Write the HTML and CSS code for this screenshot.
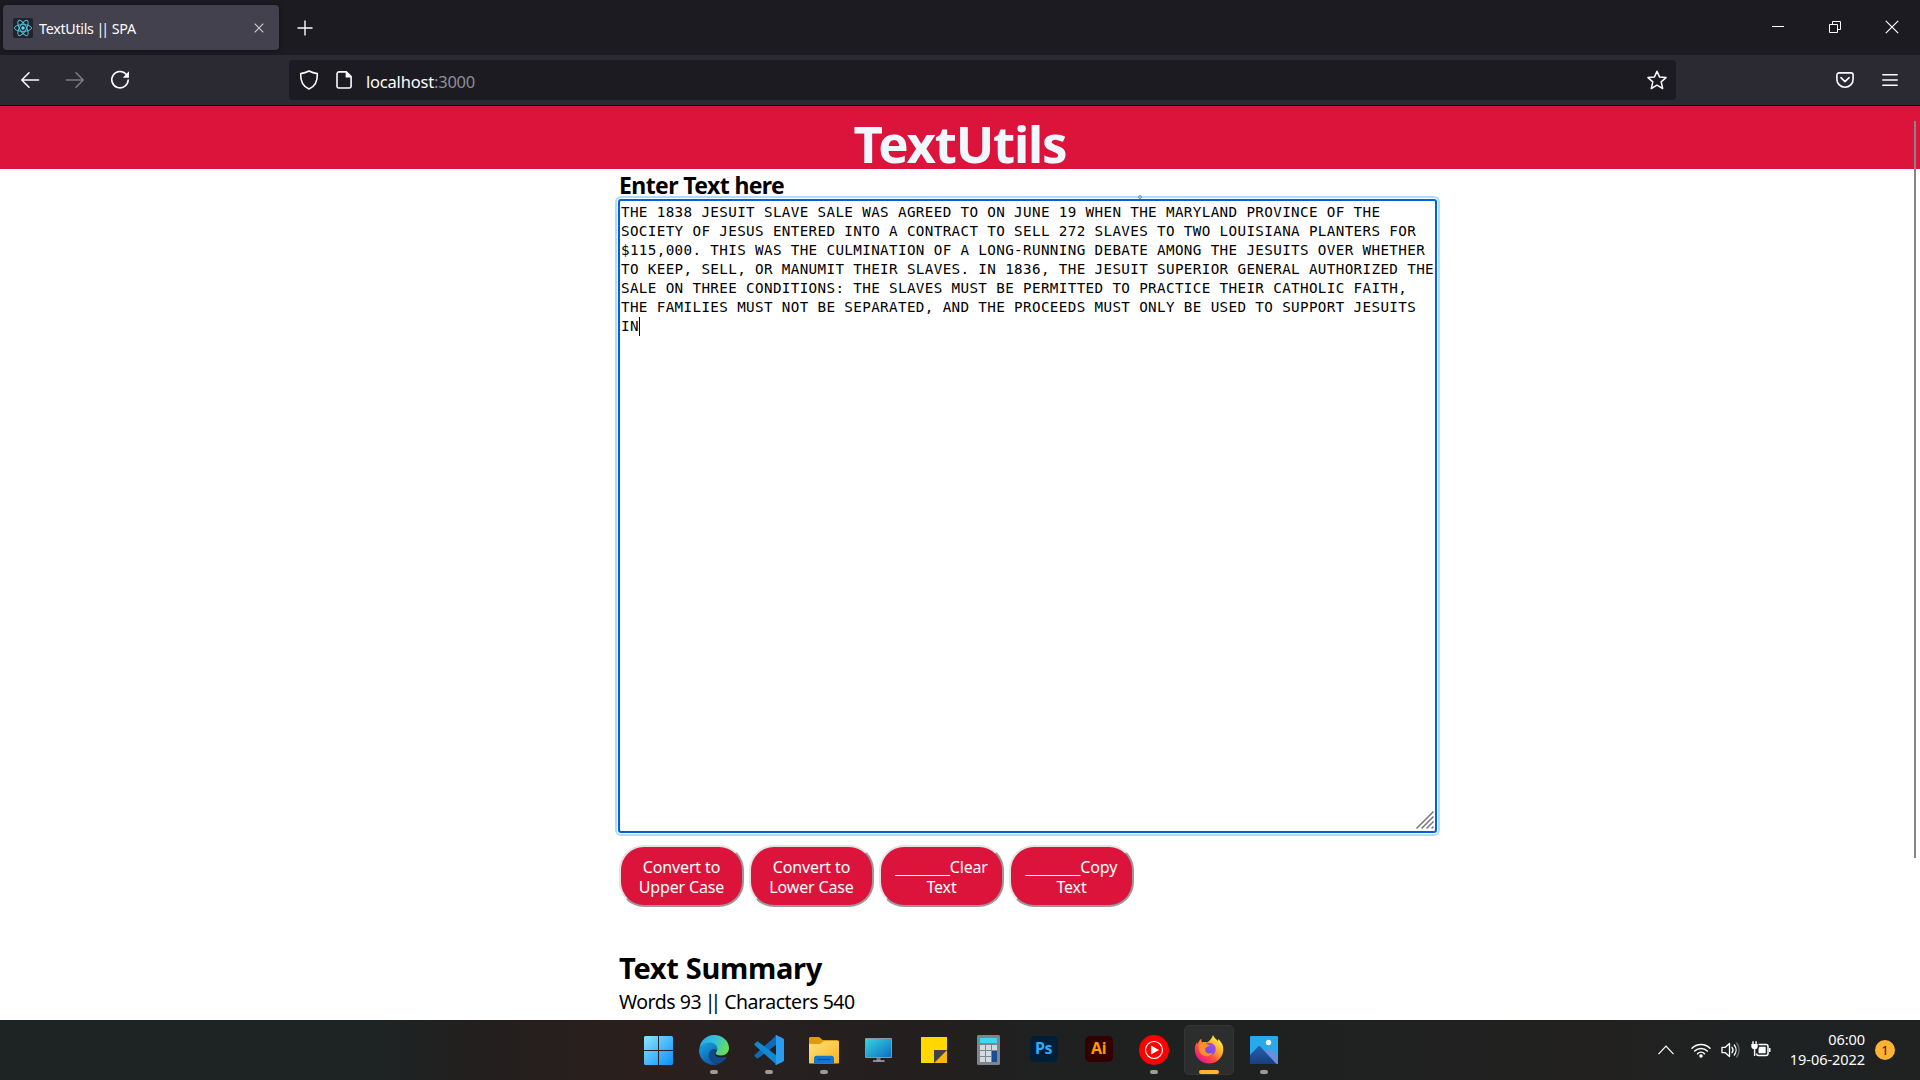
FILE: index.html
```
<!DOCTYPE html>
<html lang="en">
<head>
<meta charset="utf-8">
<title>TextUtils || SPA</title>
<link rel="stylesheet" href="styles.css">
</head>
<body>
<div class="tabbar">
  <div class="tab">
    <svg class="favicon" viewBox="0 0 20 20"><rect width="20" height="20" rx="2" fill="#20232a"/><g fill="none" stroke="#53bdd8" stroke-width="1"><ellipse cx="10" cy="10" rx="8.6" ry="3.4"/><ellipse cx="10" cy="10" rx="8.6" ry="3.4" transform="rotate(60 10 10)"/><ellipse cx="10" cy="10" rx="8.6" ry="3.4" transform="rotate(120 10 10)"/></g><circle cx="10" cy="10" r="1.7" fill="#61dafb"/></svg>
    <span class="tab-title">TextUtils <span class="pipes">||</span> SPA</span>
    <svg class="tab-close" viewBox="0 0 10 10"><path d="M.7.7l8.6 8.6M9.3.7L.7 9.3" stroke="#d0d0d5" stroke-width="1.1" fill="none"/></svg>
  </div>
  <svg class="new-tab" viewBox="0 0 16 16"><path d="M8 .5v15M.5 8h15" stroke="#fbfbfe" stroke-width="1.4" fill="none"/></svg>
  <div class="window-controls">
    <svg viewBox="0 0 14 14"><path d="M1 6.5h12" stroke="#fff"/></svg>
    <svg viewBox="0 0 14 14"><path d="M1.5 4.5h8v8h-8zM4.5 4.5v-3h8v8h-3" stroke="#fff" fill="none"/></svg>
    <svg viewBox="0 0 14 14"><path d="M.8.8l12.4 12.4M13.2.8L.8 13.2" stroke="#fff" stroke-width="1.2" fill="none"/></svg>
  </div>
</div>
<div class="toolbar">
  <div class="nav">
    <svg viewBox="0 0 20 20"><path d="M18.6 10H2M9 2.8L1.8 10 9 17.2" fill="none" stroke="#fbfbfe" stroke-width="1.6" stroke-linecap="round" stroke-linejoin="round"/></svg>
    <svg viewBox="0 0 20 20"><path d="M1.4 10H18M11 2.8l7.2 7.2-7.2 7.2" fill="none" stroke="#7b7a81" stroke-width="1.6" stroke-linecap="round" stroke-linejoin="round"/></svg>
    <svg viewBox="0 0 20 20"><path d="M16.2 4.3A8.2 8.2 0 1 0 18.2 10" fill="none" stroke="#fbfbfe" stroke-width="1.6" stroke-linecap="round"/><path d="M19 1.2v6.6h-6.2z" fill="#fbfbfe"/></svg>
  </div>
  <div class="urlbar">
    <svg class="shield" viewBox="0 0 20 20"><path d="M10 1c2.6 1.4 5.3 2.2 8.3 2.6C18.6 10.600 16 16.500 10 19 4 16.500 1.400 10.600 1.700 3.600 4.700 3.200 7.400 2.400 10 1z" fill="none" stroke="#fbfbfe" stroke-width="1.6" stroke-linejoin="round"/></svg>
    <svg class="page-icon" viewBox="0 0 16 18"><path d="M3 .9h7.300L15.100 5.700V15a2 2 0 0 1-2 2H3a2 2 0 0 1-2-2V2.900a2 2 0 0 1 2-2z" fill="none" stroke="#fbfbfe" stroke-width="1.600"/><path d="M9.600.8v5.600h5.600z" fill="#fbfbfe"/></svg>
    <span class="url">localhost<span class="port">:3000</span></span>
    <svg class="star" viewBox="0 0 20 20"><path d="M10 1.200l2.500 5.700 6.500.7-4.800 4.300 1.500 6.600L10 15.200l-5.700 3.300 1.500-6.600L1 7.600l6.500-.7z" fill="none" stroke="#fbfbfe" stroke-width="1.500" stroke-linejoin="round"/></svg>
  </div>
  <svg class="pocket" viewBox="0 0 18 16"><path d="M3 .9h12a2.100 2.100 0 0 1 2.100 2.100v4.200a8.100 8.100 0 0 1-16.200 0V3A2.100 2.100 0 0 1 3 .9z" fill="none" stroke="#fbfbfe" stroke-width="1.600"/><path d="M4.900 5.700L9 9.600l4.100-3.900" fill="none" stroke="#fbfbfe" stroke-width="1.600" stroke-linecap="round" stroke-linejoin="round"/></svg>
  <svg class="menu" viewBox="0 0 16 14"><path d="M.8 1.800h14.400M.8 7h14.400M.8 12.200h14.400" stroke="#fbfbfe" stroke-width="1.500" stroke-linecap="round"/></svg>
</div>
<div class="page">
  <header class="site-header"><h1>TextUtils</h1></header>
  <main class="content">
    <label class="field-label">Enter Text here</label>
    <div class="editor" role="textbox"><div class="editor-text">THE 1838 JESUIT SLAVE SALE WAS AGREED TO ON JUNE 19 WHEN THE MARYLAND PROVINCE OF THE
SOCIETY OF JESUS ENTERED INTO A CONTRACT TO SELL 272 SLAVES TO TWO LOUISIANA PLANTERS FOR
$115,000. THIS WAS THE CULMINATION OF A LONG-RUNNING DEBATE AMONG THE JESUITS OVER WHETHER
TO KEEP, SELL, OR MANUMIT THEIR SLAVES. IN 1836, THE JESUIT SUPERIOR GENERAL AUTHORIZED THE
SALE ON THREE CONDITIONS: THE SLAVES MUST BE PERMITTED TO PRACTICE THEIR CATHOLIC FAITH,
THE FAMILIES MUST NOT BE SEPARATED, AND THE PROCEEDS MUST ONLY BE USED TO SUPPORT JESUITS
IN<span class="caret"></span></div>
      <svg class="grip" viewBox="0 0 18 18"><path d="M.5 17.500l17-17M5.500 17.500l12-12M10.500 17.500l7-7M15.500 17.500l2-2" stroke="#777" stroke-width="1.500"/></svg>
      <span class="pointer-dot"></span>
    </div>
    <div class="buttons">
      <button>Convert to<br>Upper Case</button>
      <button>Convert to<br>Lower Case</button>
      <button><span class="blank">_______</span>Clear<br>Text</button>
      <button><span class="blank">_______</span>Copy<br>Text</button>
    </div>
    <h2>Text Summary</h2>
    <p class="counts">Words 93 <span class="pipes">||</span> Characters 540</p>
  </main>
  <div class="scroll-thumb"></div>
</div>
<div class="taskbar">
  <div class="apps">
    <div class="app"><svg viewBox="0 0 30 30"><defs><linearGradient id="win" x1="0" y1="0" x2="1" y2="1"><stop offset="0" stop-color="#8be4ff"/><stop offset="1" stop-color="#0a90f5"/></linearGradient></defs><path d="M1.500 1H14v14H0V2.500A1.500 1.500 0 0 1 1.500 1zM15 1h12.500A1.500 1.500 0 0 1 29 2.500V15H15zM0 16h14v14H1.500A1.500 1.500 0 0 1 0 28.500zM15 16h14v12.500a1.500 1.500 0 0 1-1.500 1.500H15z" fill="url(#win)"/></svg></div>
    <div class="app running"><svg viewBox="0 0 30 30"><defs><linearGradient id="eg" x1="0" y1=".2" x2="1" y2=".6"><stop offset="0" stop-color="#2ba8e0"/><stop offset=".5" stop-color="#35c1d8"/><stop offset="1" stop-color="#6be04d"/></linearGradient><linearGradient id="eb" x1="0" y1="0" x2=".6" y2="1"><stop offset="0" stop-color="#1ba5e8"/><stop offset="1" stop-color="#0c59a4"/></linearGradient></defs><path d="M.5 13C1.500 5.500 7.500 0 15 0c8.500 0 15 6 15 13 0 4.500-3.500 7.500-8 7.500-3.500 0-5.500-1.200-5.500-2.300 0-.9 1.800-1.700 1.800-4.200 0-3-3-5.500-7-5.500C6.500 8.500 2.500 10 .5 13z" fill="url(#eg)"/><path d="M0 15.500C.5 10.500 5 7.500 10.500 7.500c4.500 0 7.800 2.700 7.800 6 0 .8-.2 1.500-.6 2C15 13 10.500 15.500 10.500 20c0 5 4 9 9 9.200-1.400.5-2.900.8-4.500.8C6.500 30 0 23.500 0 15.500z" fill="url(#eb)"/><path d="M13 14.500c-3.500 2.500-4 6.500-2.500 9.500 2.500 5 8.500 6 12 3.500 2-1.300 3.700-3 5-5 .3-.5-.1-.9-.7-.7-4.800 1.900-11.300.2-11.300-3.600 0-1.200 1-1.600 1.200-3-.8-1.200-2.400-1.400-3.700-.7z" fill="#114a8b"/></svg></div>
    <div class="app running"><svg viewBox="0 0 30 30"><path d="M22.500.2L1 19.500c-.8.700-.8 1.500 0 2.200L2.700 23c.6.500 1.200.5 1.800.1L27 6z" fill="#0d6cb5"/><path d="M22.500 29.800L1 10.500c-.8-.7-.8-1.500 0-2.200L2.700 7c.6-.5 1.200-.5 1.800-.1L27 24z" fill="#1088d2"/><path d="M22 0l7 3.300c.6.300 1 .9 1 1.500v20.400c0 .6-.4 1.200-1 1.500L22 30c-.7.200-1.300 0-1.800-.5.900.7 1.800.3 1.800-1V1.500c0-1.300-.9-1.700-1.800-1C20.700 0 21.300-.2 22 0z" fill="#2a9df0"/></svg></div>
    <div class="app running"><svg viewBox="0 0 30 30"><defs><linearGradient id="fo" x1="0" y1="0" x2="1" y2="1"><stop offset="0" stop-color="#ffe07d"/><stop offset="1" stop-color="#f9b51c"/></linearGradient></defs><path d="M0 3.500C0 2.600.6 2 1.500 2h8c.6 0 1 .2 1.400.6L13.500 5H28c1.200 0 2 .8 2 2v5H0z" fill="#e09a10"/><path d="M0 9h10.500c.7 0 1.200-.2 1.700-.7L14 6.500C14.400 6.200 14.800 6 15.400 6H29c.6 0 1 .4 1 1v20.500c0 .6-.4 1-1 1H1c-.6 0-1-.4-1-1z" fill="url(#fo)"/><path d="M5 28.500V23c0-1.300 1-2.300 2.300-2.300h15.400c1.300 0 2.300 1 2.300 2.300v5.500z" fill="#1477cf"/><path d="M8.500 24.500h13" stroke="#0a4d96" stroke-width="1.200"/></svg></div>
    <div class="app"><svg viewBox="0 0 30 30"><defs><linearGradient id="pc" x1="0" y1="0" x2="1" y2="1"><stop offset="0" stop-color="#36d3dd"/><stop offset="1" stop-color="#0d6fc4"/></linearGradient></defs><path d="M12.500 22h4v4h-4z" fill="#737b82"/><path d="M9 25.300h11.500v1.500H9z" fill="#a8adb2"/><rect x="1" y="3" width="27" height="20" rx="1" fill="#8d979e"/><path d="M2 4h25v18H2z" fill="url(#pc)"/></svg></div>
    <div class="app"><svg viewBox="0 0 30 30"><path d="M2 2h26v13L15 28H2z" fill="#ffd800"/><path d="M15 28l13-13v13z" fill="#fbb60c"/><path d="M15 15h13L15 28z" fill="#434343"/></svg></div>
    <div class="app"><svg viewBox="0 0 30 30"><rect x="3" y="0" width="23" height="30" rx="1.500" fill="#7d868e"/><path d="M6 3h17v5H6z" fill="#3fd6f5"/><path d="M6 10h5v5H6zM12 10h5v5h-5zM18 10h5v5h-5zM6 16h5v5H6zM12 16h5v5h-5zM6 22h5v5H6zM12 22h5v5h-5z" fill="#d2dae0"/><path d="M18 16h5v11h-5z" fill="#184f91"/></svg></div>
    <div class="app"><span class="adobe ps">Ps</span></div>
    <div class="app"><span class="adobe ai">Ai</span></div>
    <div class="app running"><svg viewBox="0 0 30 30"><circle cx="15" cy="15" r="15" fill="#f00"/><circle cx="15" cy="15" r="8.500" fill="none" stroke="#fff" stroke-width="1.100"/><path d="M12 10.500l8 4.500-8 4.500z" fill="#fff"/></svg></div>
    <div class="app running active"><svg viewBox="0 0 30 30"><defs><linearGradient id="fx" x1=".85" y1=".1" x2=".2" y2=".9"><stop offset="0" stop-color="#fff14a"/><stop offset=".4" stop-color="#ffa22b"/><stop offset=".7" stop-color="#ff4a3e"/><stop offset="1" stop-color="#e8178a"/></linearGradient><linearGradient id="fp" x1="1" y1="0" x2="0" y2="1"><stop offset="0" stop-color="#b04af0"/><stop offset="1" stop-color="#5b4ddb"/></linearGradient></defs><path d="M19 0c1 2.500 3 4 4.800 6l.6-2C28 7.500 29.500 11 29.300 15 29 22.500 23 28.500 15.200 28.500 7 28.500.8 22.500.8 14.500c0-3 .8-5.300 2.200-7.500 0 1 .2 1.700.5 2.300C4.500 7.500 5 5.500 7.400 3.800c-.2 1.300 0 2.500.8 3.700 1.800-.6 3.500-.5 4.800 0C15.500 6 18 3.500 19 0z" fill="url(#fx)"/><circle cx="15.200" cy="14.200" r="6.500" fill="url(#fp)"/><path d="M5 9c2.500-1.500 5.500-1.300 7.800.2.800.6 1.800.9 3 .9-.5 1.700-3.200 1.600-4.200 2.900-.6.900-.2 1.900-.2 3.200 1.500 2.300 5 3.100 7.200 1.300-1.300 5-9.600 5-12.600 0C4.500 15 4 12 5 9z" fill="#ff8f2e"/></svg></div>
    <div class="app running"><svg viewBox="0 0 30 30"><defs><linearGradient id="ph" x1="0" y1="0" x2="0" y2="1"><stop offset="0" stop-color="#2a5fae"/><stop offset="1" stop-color="#153f80"/></linearGradient></defs><rect x="1" y="1" width="28" height="28" rx="1" fill="#27a9ea"/><path d="M14 20l5.500-6c.7-.6 1.500-.6 2.200 0L29 22v6.500H18z" fill="#6a8fe0"/><path d="M1 20l8.300-8.500c.6-.6 1.400-.6 2 0L27.500 29H2c-.6 0-1-.4-1-1z" fill="url(#ph)"/><circle cx="19.500" cy="7.500" r="2.700" fill="#f2f8fc"/></svg></div>
  </div>
  <div class="tray">
    <svg class="chevron" viewBox="0 0 16 10"><path d="M.5 9.200L8 1.200l7.500 8" fill="none" stroke="#fff" stroke-width="1.200"/></svg>
    <svg class="wifi" viewBox="0 0 20 16"><g fill="none" stroke="#fff" stroke-width="1.500" stroke-linecap="round"><path d="M1 6.200a12.700 12.700 0 0 1 18 0M3.700 9a8.900 8.900 0 0 1 12.600 0M6.500 11.700a5 5 0 0 1 7 0"/></g><circle cx="10" cy="14" r="1.800" fill="#fff"/></svg>
    <svg class="speaker" viewBox="0 0 20 16"><path d="M1 5.300h3.300L8.500 1.500v13L4.300 10.700H1z" fill="none" stroke="#fff" stroke-width="1.300" stroke-linejoin="round"/><path d="M11 5.300a4.500 4.500 0 0 1 0 5.400M13.300 3a8 8 0 0 1 0 10" fill="none" stroke="#fff" stroke-width="1.300" stroke-linecap="round"/><path d="M15.700 1a11.500 11.500 0 0 1 0 14" fill="none" stroke="#6d6f70" stroke-width="1.300" stroke-linecap="round"/></svg>
    <svg class="battery" viewBox="0 0 20 16"><path d="M7.500 3.500H15a2 2 0 0 1 2 2v7a2 2 0 0 1-2 2H7.500a2 2 0 0 1-2-2" fill="none" stroke="#fff" stroke-width="1.500"/><path d="M8.500 5.800h6.200v6.400H7.500V8z" fill="#fff"/><path d="M18 7h1.500v4H18zM.3 3h6.400v2.800A2.300 2.300 0 0 1 4.300 8v7H2.900V8A2.500 2.500 0 0 1 .3 5.800zM1.300.3h1.400V3H1.300zM4.400.3h1.400V3H4.400z" fill="#fff"/></svg>
    <div class="clock"><span>06:00</span><span>19-06-2022</span></div>
    <span class="notify">1</span>
  </div>
</div>
</body>
</html>
```
FILE: styles.css
```
* { box-sizing: border-box; }
body {
  margin: 0;
  height: 1080px;
  overflow: hidden;
  display: flex;
  flex-direction: column;
  background: #fff;
  color: #000;
  font-family: "Noto Sans", "Open Sans", sans-serif;
}
svg { display: block; flex: none; overflow: visible; }

/* Browser chrome */
.tabbar {
  height: 55px;
  flex: none;
  display: flex;
  align-items: center;
  padding-left: 3px;
  background: #1c1b22;
}
.tab {
  width: 276px;
  height: 45px;
  display: flex;
  align-items: center;
  padding: 0 15px 0 10px;
  border-radius: 4px;
  background: #42414d;
  box-shadow: 0 0 4px rgba(0, 0, 0, .4);
}
.favicon { width: 20px; height: 20px; }
.tab-title {
  flex: 1;
  margin-left: 6px;
  font-size: 14.3px;
  letter-spacing: -.3px;
  line-height: 20px;
  padding-top: 2px;
  white-space: nowrap;
  color: #fbfbfe;
}
.tab-title .pipes { margin: 0 2.5px 0 -.5px; letter-spacing: -3.2px; }
.tab-close { width: 10px; height: 10px; }
.new-tab { width: 16px; height: 16px; margin-left: 18px; }
.window-controls { display: flex; gap: 43px; margin: 0 21px 2px auto; }
.window-controls svg { width: 14px; height: 14px; }
.toolbar {
  height: 51px;
  flex: none;
  display: flex;
  align-items: center;
  padding: 0 22px 1px 20px;
  background: #2b2a33;
  border-bottom: 1px solid #0c0c0d;
}
.nav { width: 269px; display: flex; gap: 25px; padding-top: 1px; }
.nav svg { width: 20px; height: 20px; }
.urlbar {
  width: 1387px;
  height: 40px;
  display: flex;
  align-items: center;
  padding: 0 9px 0 10px;
  border-radius: 4px;
  background: #1c1b22;
}
.shield { width: 20px; height: 20px; }
.page-icon { width: 16px; height: 18px; margin-left: 17px; }
.url {
  flex: 1;
  margin-left: 14px;
  padding-top: 5px;
  font-size: 16.5px;
  letter-spacing: -.2px;
  line-height: 22px;
  color: #fbfbfe;
}
.port { color: #8f8f96; }
.star { width: 20px; height: 20px; }
.pocket { width: 18px; height: 16px; margin-left: 160px; }
.menu { width: 16px; height: 14px; margin-left: auto; }

/* Page */
.page { position: relative; height: 914px; flex: none; overflow: hidden; }
.site-header { height: 63px; padding-top: 11px; background: #dc143c; text-align: center; }
h1, h2, p { margin: 0; }
h1 {
  font-size: 51px;
  line-height: 53px;
  letter-spacing: -1.2px;
  color: #f0f8ff;
}
.content { width: 819px; margin-left: 618px; }
.field-label {
  display: block;
  height: 30px;
  padding-left: 1px;
  font-size: 23px;
  font-weight: 700;
  line-height: 33px;
  letter-spacing: -.6px;
}
.editor {
  position: relative;
  height: 634px;
  padding: 2px 1px;
  border: 2px solid #0060df;
  border-radius: 3px;
  box-shadow: 0 0 0 1px #fff, 0 0 0 3px #b0dcfa;
}
.editor-text {
  font: 14.25px/19px "DejaVu Sans Mono", "Liberation Mono", monospace;
  letter-spacing: .355px;
  white-space: pre;
}
.caret {
  display: inline-block;
  width: 1px;
  height: 19px;
  vertical-align: top;
  background: #000;
}
.grip { position: absolute; right: 1px; bottom: 2px; width: 18px; height: 18px; }
.pointer-dot {
  position: absolute;
  left: 518px;
  top: -6px;
  width: 4px;
  height: 4px;
  border: 1px solid #6d8fa8;
  border-radius: 50%;
}
.buttons { display: flex; gap: 5px; margin: 12px 0 0 1px; }
.buttons button {
  width: 125px;
  height: 62px;
  padding: 1px 0 0;
  border: 2px solid;
  border-color: #e3e3e3 #999 #999 #e3e3e3;
  border-radius: 25px;
  background: #dc143c;
  color: #fff;
  font: 16px/20px "Noto Sans", "Open Sans", sans-serif;
  letter-spacing: -.15px;
}
.blank { font-family: "Liberation Sans", sans-serif; font-size: 14px; line-height: 1; letter-spacing: 0; }
h2 {
  margin-top: 41px;
  padding-left: 1px;
  font-size: 29px;
  line-height: 40px;
  letter-spacing: -.3px;
}
.counts { margin-top: 1px; padding-left: 1px; font-size: 19.5px; line-height: 26px; letter-spacing: -.48px; }
.counts .pipes { margin: 0 3px 0 -1px; letter-spacing: -4.8px; }
.scroll-thumb {
  position: absolute;
  left: 1914px;
  top: 15px;
  width: 2px;
  height: 737px;
  background: #858585;
}

/* Taskbar */
.taskbar {
  height: 60px;
  flex: none;
  display: flex;
  align-items: center;
  padding: 0 25px 0 631px;
  background: linear-gradient(90deg, #1e2323 0, #1e2323 380px, #231f1e 490px, #2b1f1d 640px, #262020 760px, #231f1e 930px, #1f2121 1050px, #1f2121 1300px, #222120 1600px, #1e2223 1780px, #202121 1920px);
}
.apps { display: flex; }
.app {
  position: relative;
  width: 55px;
  height: 60px;
  display: flex;
  align-items: center;
  justify-content: center;
}
.app svg { width: 30px; height: 30px; position: relative; }
.running::after {
  content: "";
  position: absolute;
  bottom: 6px;
  left: 24px;
  width: 8px;
  height: 4px;
  border-radius: 2px;
  background: #9c9b9a;
}
.active::before {
  content: "";
  position: absolute;
  inset: 5px 2px 5px 3px;
  border: 1px solid #353737;
  border-radius: 5px;
  background: #2c2e2e;
}
.active::after { left: 18px; width: 20px; background: #ffb52e; }
.adobe {
  width: 28px;
  height: 26px;
  margin-top: -3px;
  border-radius: 5px;
  font-size: 16px;
  font-weight: 700;
  line-height: 25px;
  text-align: center;
  letter-spacing: -.5px;
}
.ps { background: #001e36; color: #31a8ff; }
.ai { background: #330000; color: #ff9a00; }
.tray { margin-left: auto; display: flex; align-items: center; color: #fff; }
.chevron { width: 16px; height: 10px; }
.wifi { width: 20px; height: 16px; margin-left: 17px; }
.speaker { width: 20px; height: 16px; margin-left: 10px; }
.battery { width: 20px; height: 16px; margin: 0 0 2px 10px; }
.clock {
  width: 94px;
  margin-bottom: 2px;
  display: flex;
  flex-direction: column;
  align-items: flex-end;
  font-size: 14.5px;
  line-height: 20px;
  letter-spacing: -.05px;
}
.notify {
  width: 20px;
  height: 20px;
  margin-left: 10px;
  border-radius: 50%;
  background: #ffb234;
  color: #1d1600;
  font-size: 13px;
  line-height: 20px;
  text-align: center;
}
```
